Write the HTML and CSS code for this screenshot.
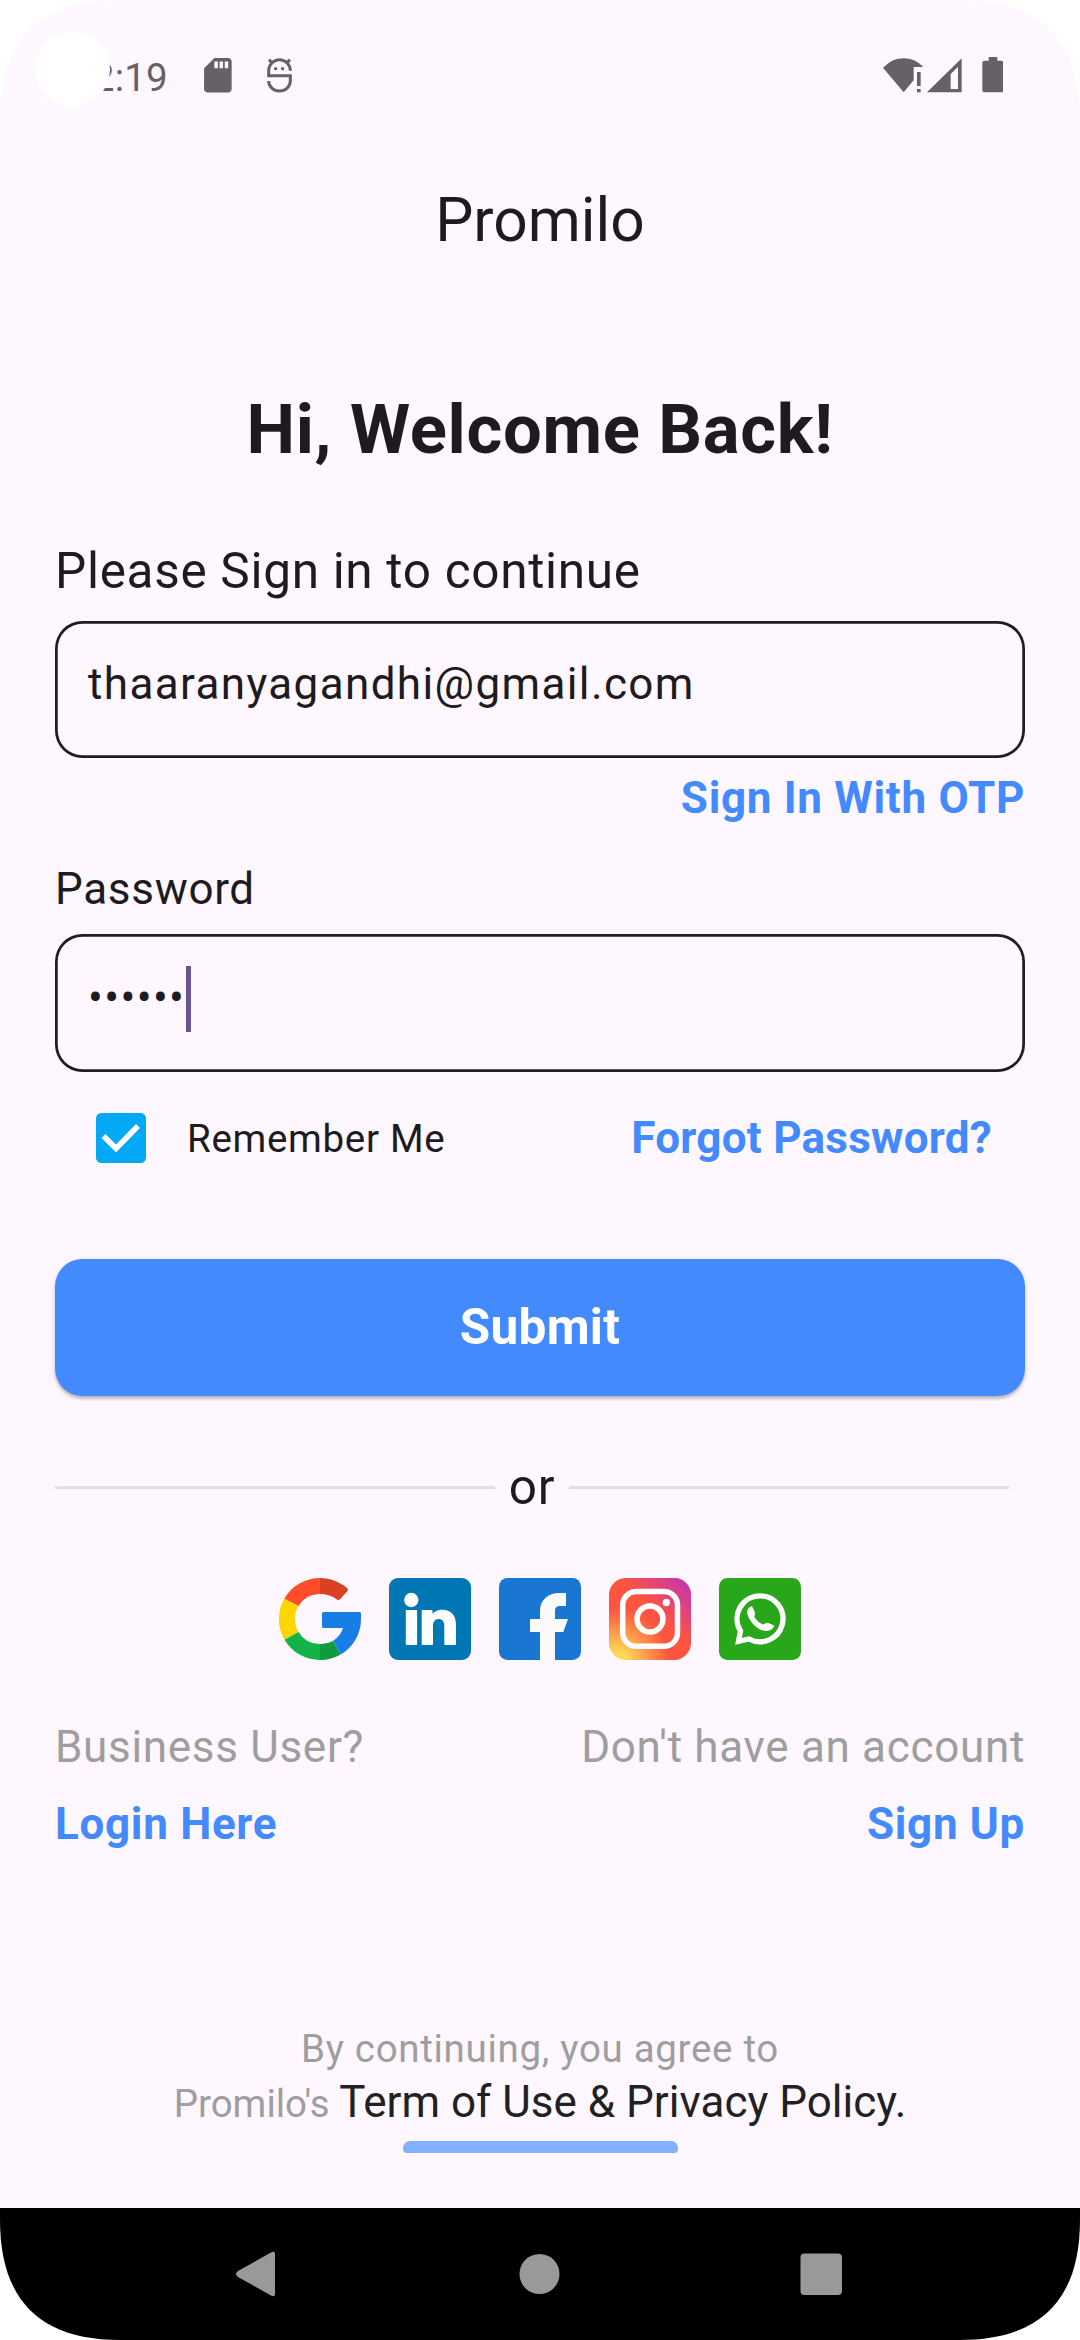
FILE: index.html
```html
<!DOCTYPE html>
<html lang="en">
<head>
<meta charset="utf-8">
<title>Promilo</title>
<link rel="stylesheet" href="styles.css">
</head>
<body>
<div class="phone">
  <header class="status">
    <span class="clock">12:19</span>
    <svg class="sd" viewBox="4 2 16 20"><path d="M18 2h-8L4.02 8 4 20c0 1.1.9 2 2 2h12c1.1 0 2-.9 2-2V4c0-1.1-.9-2-2-2zm-6 6h-2V4h2v4zm3 0h-2V4h2v4zm3 0h-2V4h2v4z"/></svg>
    <svg class="bot" viewBox="798 171 84 108"><path class="line" d="M806 231V212a32.500 32.500 0 0 1 65 0M802 227H871V243a32.500 30 0 0 1-65 0M807 179l11 11M870 179l-11 11"/><circle cx="827" cy="206" r="5"/><circle cx="848" cy="206" r="5"/></svg>
    <div class="status-end">
      <svg class="wifi" viewBox="249 171 121 108"><path d="M249 203Q276 175 311 175Q345 175 370 201H341V241L311 277ZM351 216H362V258H351ZM351 267H362V277H351Z"/></svg>
      <svg class="signal" viewBox="382 171 105 108"><path fill-rule="evenodd" d="M382 277L486 175V277ZM453 222V267H475V201Z"/></svg>
      <svg class="battery" viewBox="545 171 65 108"><path d="M565 171H591V182H603Q609 182 609 188V271Q609 277 603 277H552Q546 277 546 271V188Q546 182 552 182H565Z"/></svg>
    </div>
    <span class="camera"></span>
  </header>

  <main class="page">
    <div class="title">Promilo</div>
    <h1 class="welcome">Hi, Welcome Back!</h1>
    <div class="lead">Please Sign in to continue</div>
    <div class="field">thaaranyagandhi@gmail.com</div>
    <a class="link otp">Sign In With OTP</a>
    <div class="label">Password</div>
    <div class="field">••••••<span class="caret"></span></div>
    <div class="options">
      <svg class="check" viewBox="0 0 50 50"><rect width="50" height="50" rx="5.500" fill="#03a9f4"/><path d="M7.500 23L20 35.500L42 13" fill="none" stroke="#fff" stroke-width="5.500"/></svg>
      <span class="remember">Remember Me</span>
      <a class="link forgot">Forgot Password?</a>
    </div>
    <button class="submit">Submit</button>
    <div class="divider"><span class="rule"></span><span class="or">or</span><span class="rule"></span></div>

    <div class="social">
      <svg viewBox="0 0 82 82">
        <path fill="#ff4c29" d="M41 0A41 41 0 0 0 5.300 20.800L19.500 28A25 25 0 0 1 41 16Z"/>
        <path fill="#d94024" d="M41 0C51 0 61 4 68 10Q69.700 11.500 68.500 13L61 21.300Q59.500 22.600 58 21.500Q51 16 41 16Z"/>
        <path fill="#ffd500" d="M5.300 20.800A41 41 0 0 0 5.500 61.700L19.500 54A25 25 0 0 1 19.500 28Z"/>
        <path fill="#14b34a" d="M5.500 61.700A41 41 0 0 0 41 82V66A25 25 0 0 1 19.500 54Z"/>
        <path fill="#109b3e" d="M41 82A41 41 0 0 0 61.700 76.500L54 63A25 25 0 0 1 41 66Z"/>
        <path fill="#167ee6" d="M44.500 34H80.500Q82 34 82 35.500V41A41 41 0 0 1 61.700 76.500L54 63Q61.500 58 64 50H44.500Q43 50 43 48.500V35.500Q43 34 44.500 34Z"/>
      </svg>
      <svg viewBox="0 0 82 82">
        <rect width="82" height="82" rx="9" fill="#0077b5"/>
        <g fill="#fff"><circle cx="22.300" cy="22" r="7.200"/><rect x="16.800" y="32" width="11.300" height="35" rx="1"/>
        <path d="M33.700 32H42.500q1 0 1 1V36C45 34 48 31.700 53 31.700C62 31.700 67 37 67 47V66q0 1-1 1H56.300q-1 0-1-1V48C55.300 43.500 53 41 49.700 41C46 41 44 43.800 44 48V66q0 1-1 1H33.700q-1 0-1-1V33q0-1 1-1Z"/></g>
      </svg>
      <svg viewBox="0 0 82 82">
        <rect width="82" height="82" rx="8.500" fill="#1976d2"/>
        <path fill="#fafafa" d="M67 15H60C49 15 41 22 41 33V41H31V54H41V82H56V54H64.300L69 41H56V34C56 30 57 28 61 28H67Z"/>
      </svg>
      <svg viewBox="0 0 82 82">
        <defs>
          <radialGradient id="warm" gradientUnits="userSpaceOnUse" cx="8" cy="84" r="88"><stop offset="0" stop-color="#ffdd55"/><stop offset=".12" stop-color="#ffd755"/><stop offset=".6" stop-color="#ff543f"/><stop offset="1" stop-color="#ff543f"/></radialGradient>
          <linearGradient id="violet" gradientUnits="userSpaceOnUse" x1="46" y1="36" x2="77" y2="5"><stop offset="0" stop-color="#c837ab" stop-opacity="0"/><stop offset="1" stop-color="#c637ac"/></linearGradient>
        </defs>
        <rect width="82" height="82" rx="17" fill="url(#warm)"/><rect width="82" height="82" rx="17" fill="url(#violet)"/>
        <g fill="none" stroke="#fff" stroke-width="5.500"><rect x="13.700" y="13.500" width="54.800" height="54.800" rx="13.500"/><circle cx="41" cy="41" r="13"/></g>
        <circle cx="57.300" cy="24.500" r="3.700" fill="#fff"/>
      </svg>
      <svg viewBox="0 0 82 82">
        <rect width="82" height="82" rx="8.500" fill="#29a71a"/>
        <path fill="none" stroke="#fff" stroke-width="5.300" d="M41 17.800A23 23 0 1 1 30 61L19.500 63.300L21.500 53A23 23 0 0 1 41 17.800Z"/>
        <path fill="#fff" d="M32 28.500Q28 30 28 35Q29.500 41 34.500 46.500Q39.500 51.500 44 52.600Q49.500 53.500 52.500 51.500Q55.500 49 55 47.500L49 44.700Q47.500 44.500 44 46.500Q39 44.500 35.300 39Q36 37 36 34.500L33.500 29Q33 28 32 28.500Z"/>
      </svg>
    </div>

    <div class="accounts">
      <div class="account"><span class="muted">Business User?</span><a class="link">Login Here</a></div>
      <div class="account account-end"><span class="muted">Don't have an account</span><a class="link">Sign Up</a></div>
    </div>

    <footer class="legal">
      <div class="agree">By continuing, you agree to</div>
      <div class="terms"><span class="agree-name">Promilo's </span>Term of Use &amp; Privacy Policy.</div>
      <div class="handle"></div>
    </footer>
  </main>

  <nav class="nav">
    <svg viewBox="0 0 46 46"><path d="M5 20L38 1.500Q42 -0.500 42 3V43Q42 46.500 38 44.500L5 26Q1 23 5 20Z"/></svg>
    <svg viewBox="0 0 46 46"><circle cx="23.500" cy="23" r="20"/></svg>
    <svg viewBox="0 0 46 46"><rect x="2.500" y="2.500" width="41.500" height="41.500" rx="4"/></svg>
  </nav>
</div>
</body>
</html>
```

FILE: styles.css
```css
* { box-sizing: border-box; }
body { margin: 0; background: #fff; }
svg { display: block; flex: none; }

.phone {
  display: flex;
  flex-direction: column;
  width: 1080px;
  height: 2340px;
  background: #fef7ff;
  color: #1d1b20;
  font-family: Roboto, "Liberation Sans", sans-serif;
  font-size: 44px;
  line-height: 52px;
  letter-spacing: 0.69px;
  clip-path: path("M0 120C0 40 40 0 120 0H960C1040 0 1080 40 1080 120V2220C1080 2300 1040 2340 960 2340H120C40 2340 0 2300 0 2220Z");
}

/* status bar */
.status {
  position: relative;
  display: flex;
  align-items: flex-start;
  height: 185px;
  padding: 57px 76.700px 0 71px;
  fill: #656266;
}
.clock {
  width: 133.300px;
  margin-top: -2px;
  font-size: 38.500px;
  line-height: 46px;
  letter-spacing: 0.2px;
  color: #656266;
}
.sd { width: 27.700px; height: 34.500px; margin-top: 1px; }
.bot { width: 28px; height: 36px; margin-left: 34px; }
.line { fill: none; stroke: #656266; stroke-width: 9; }
.status-end { display: flex; margin-left: auto; }
.wifi { width: 40.330px; height: 36px; }
.signal { width: 35px; height: 36px; margin-left: 4px; }
.battery { width: 21.670px; height: 36px; margin-left: 19.300px; }
.camera {
  position: absolute;
  left: 35px;
  top: 32px;
  width: 75px;
  height: 75px;
  border-radius: 50%;
  background: #fff;
}

/* sign-in form */
.page {
  display: flex;
  flex-direction: column;
  flex: 1;
  padding: 0 55px;
}
.title {
  text-align: center;
  font-size: 60.500px;
  line-height: 72px;
  letter-spacing: 0;
}
.welcome {
  margin: 133px 0 0;
  text-align: center;
  font-size: 68.750px;
  font-weight: 700;
  line-height: 80px;
}
.lead {
  margin-top: 72px;
  font-size: 49.500px;
  line-height: 58px;
}
.field {
  display: flex;
  height: 137.500px;
  margin-top: 20.500px;
  padding: 37.500px 33px 0;
  border-radius: 27.500px;
  box-shadow: inset 0 0 0 2.750px #1f1e21;
  letter-spacing: 1.375px;
}
.caret {
  width: 5.500px;
  height: 66px;
  margin: -5.500px 0 0 0.500px;
  background: #69558f;
}
.link { color: #448aff; font-weight: 700; }
.otp { align-self: flex-end; margin-top: 14px; }
.label { margin-top: 39px; }
.label + .field { margin-top: 19px; }
.options {
  display: flex;
  align-items: center;
  margin-top: 40.500px;
  padding: 0 33px 0 41px;
}
.check { width: 50px; height: 50px; }
.remember { margin-left: 41px; padding-top: 1px; font-size: 38.500px; line-height: 50px; }
.forgot { margin-left: auto; letter-spacing: 0.275px; }
.submit {
  height: 137.500px;
  margin-top: 94.500px;
  border: 0;
  border-radius: 27.500px;
  background: #448aff;
  box-shadow: 0 3px 3px rgba(0, 0, 0, 0.22), 0 1px 6px rgba(0, 0, 0, 0.08);
  color: #fff;
  font: 700 49.500px/58px Roboto, "Liberation Sans", sans-serif;
  letter-spacing: 0.275px;
}
.divider {
  display: flex;
  align-items: center;
  gap: 13.750px;
  height: 58px;
  margin-top: 62px;
  padding-right: 16px;
}
.rule { flex: 1; height: 3px; background: #e1dfe1; }
.or { font-size: 49.500px; line-height: 58px; }

.social {
  display: flex;
  justify-content: center;
  gap: 28px;
  margin-top: 62px;
}
.social svg { width: 82px; height: 82px; }

.accounts {
  display: flex;
  justify-content: space-between;
  margin-top: 61px;
}
.account { display: flex; flex-direction: column; gap: 25px; }
.account-end { align-items: flex-end; }
.muted { color: #9e9e9e; }

.legal { margin-top: 176px; text-align: center; }
.agree { color: #9e9e9e; font-size: 38.500px; line-height: 46px; }
.terms { height: 52px; margin-top: 4px; color: #212121; letter-spacing: 0; }
.agree-name { color: #9e9e9e; font-size: 38.500px; }
.handle {
  width: 275px;
  height: 12px;
  margin: 13px auto 0;
  border-radius: 7px 7px 4px 4px;
  background: #82b1ff;
}

/* system navigation */
.nav {
  display: flex;
  justify-content: space-between;
  height: 132px;
  padding: 43px 236px 0 233px;
  background: #000;
  fill: #999;
}
.nav svg { width: 46px; height: 46px; }
```
